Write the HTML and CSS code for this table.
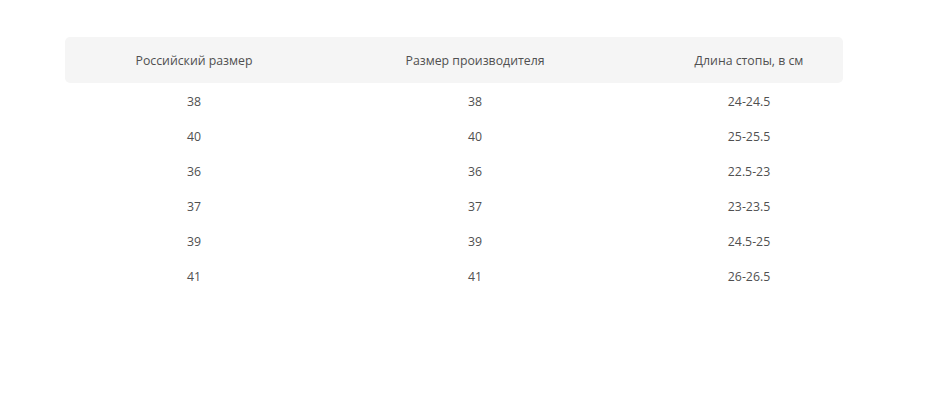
FILE: index.html
```html
<!DOCTYPE html>
<html lang="ru">
<head>
<meta charset="utf-8">
<link rel="stylesheet" href="styles.css">
</head>
<body>
<div class="page">
  <div class="table">
    <div class="row head">
      <div class="cell c1">Российский размер</div>
      <div class="cell c2">Размер производителя</div>
      <div class="cell c3">Длина стопы, в см</div>
    </div>
    <div class="row"><div class="cell c1">38</div><div class="cell c2">38</div><div class="cell c3">24-24.5</div></div>
    <div class="row"><div class="cell c1">40</div><div class="cell c2">40</div><div class="cell c3">25-25.5</div></div>
    <div class="row"><div class="cell c1">36</div><div class="cell c2">36</div><div class="cell c3">22.5-23</div></div>
    <div class="row"><div class="cell c1">37</div><div class="cell c2">37</div><div class="cell c3">23-23.5</div></div>
    <div class="row"><div class="cell c1">39</div><div class="cell c2">39</div><div class="cell c3">24.5-25</div></div>
    <div class="row"><div class="cell c1">41</div><div class="cell c2">41</div><div class="cell c3">26-26.5</div></div>
  </div>
</div>
</body>
</html>
```
FILE: styles.css
```css
html, body {
  margin: 0;
  padding: 0;
  background: #ffffff;
}
.page {
  padding: 37px 0 0 65px;
  font-family: "Open Sans", "Noto Sans", sans-serif;
  font-size: 12.3px;
  color: #505050;
}
.table {
  width: 778px;
}
.row {
  display: grid;
  grid-template-columns: 258px 304px 216px;
  height: 35px;
  align-items: center;
}
.row.head {
  height: 46px;
  background: #f5f5f5;
  border-radius: 5px;
}
.cell {
  text-align: center;
  line-height: 1;
  padding-top: 4px;
}
.head .cell {
  padding-top: 2px;
}
.c3 {
  padding-left: 28px;
}
```
